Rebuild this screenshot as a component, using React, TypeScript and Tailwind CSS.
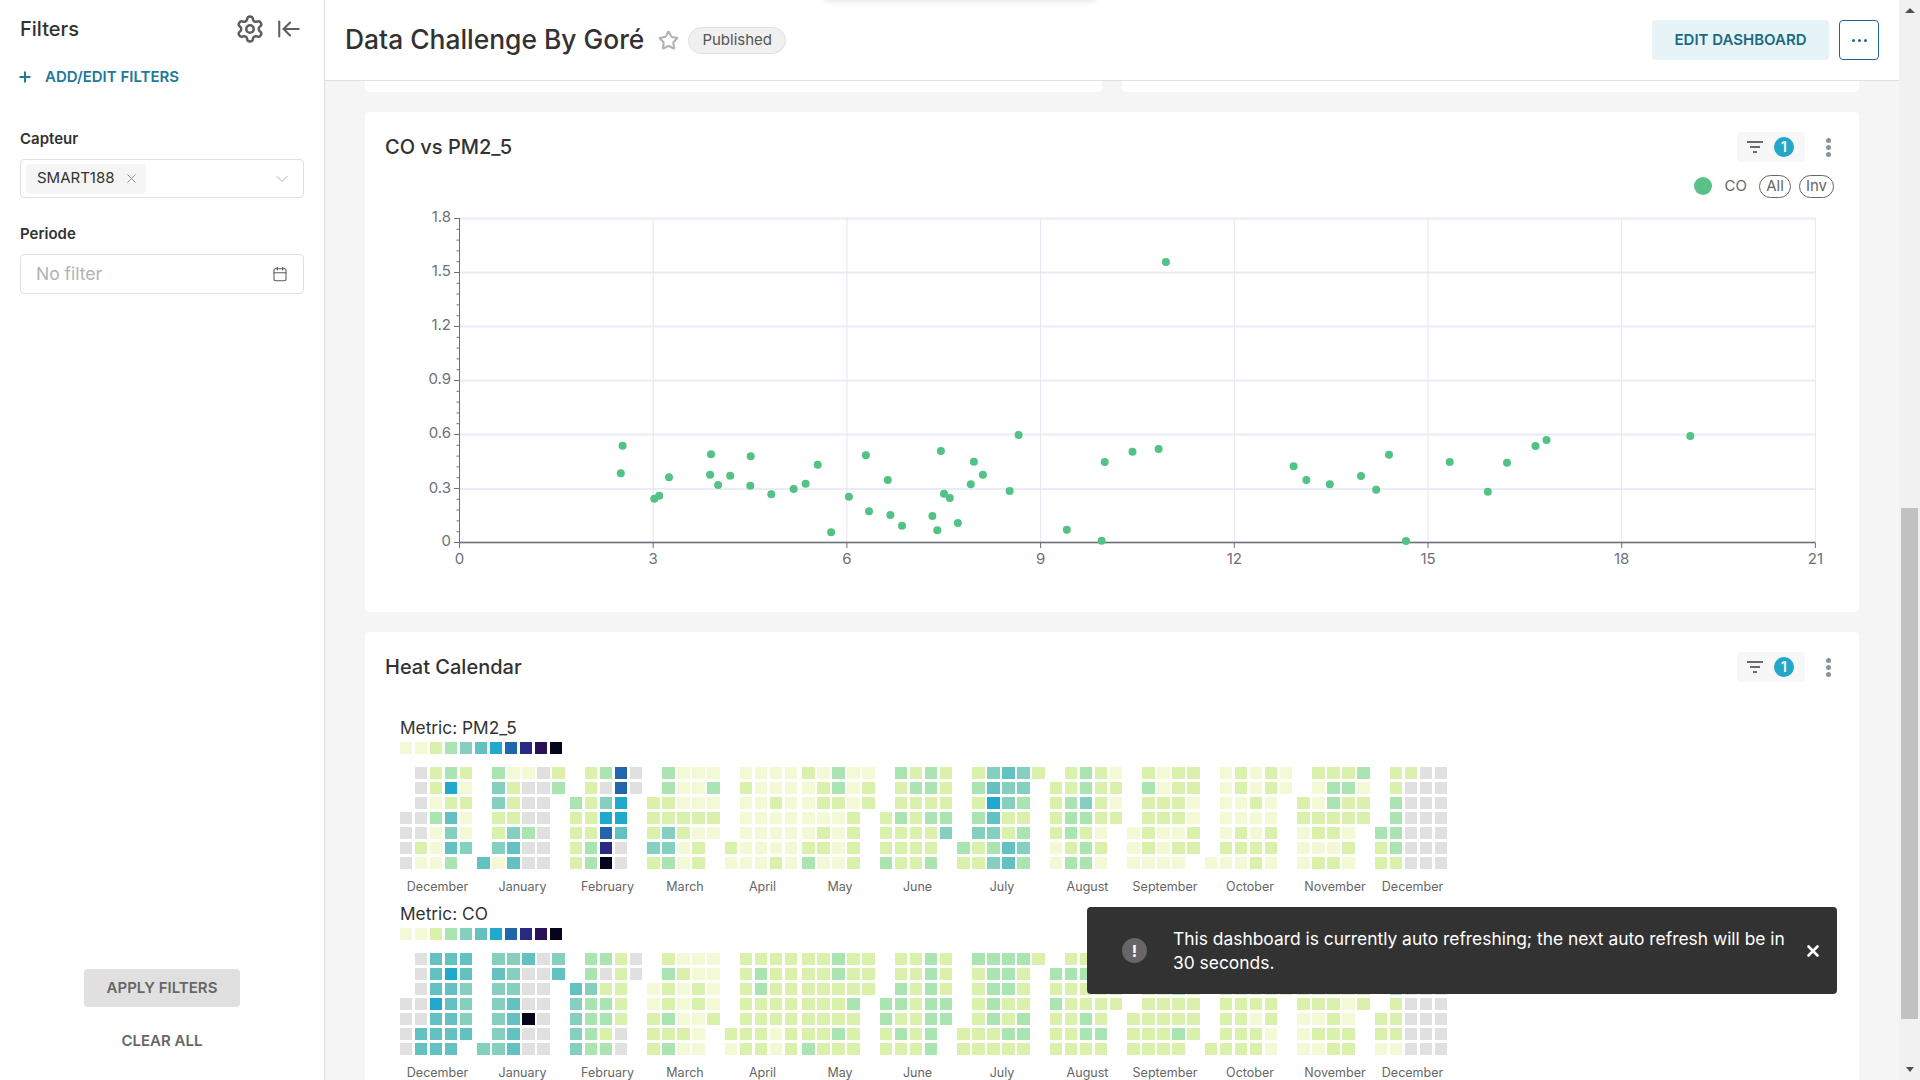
import {ArrowLeftToLine, Calendar, ChevronDown, Plus, Settings, Star, X} from "lucide-react";

const levelColors: Record<string, string> = {
  g: "#e0e0e0",
  "1": "#f3f9d4",
  "2": "#d9f1ab",
  "3": "#aae4b0",
  "4": "#84cfbd",
  "5": "#63c1c1",
  "6": "#20a9cd",
  "7": "#2166ac",
  "8": "#2a2a85",
  "9": "#2a1158",
  "0": "#04041c",
};

const legendLevels = ["1", "1", "2", "3", "4", "5", "6", "7", "8", "9", "0"];

// x of each week column and label centre per month
const months = [
  {name: "December", label: 437.5, w: 12, xs: [400, 415, 430, 445, 460]},
  {name: "January", label: 522.5, w: 13, xs: [477, 492, 507, 522, 537, 552]},
  {name: "February", label: 607.5, w: 12, xs: [570, 585, 600, 615, 630]},
  {name: "March", label: 685, w: 13, xs: [647, 662, 677, 692, 707]},
  {name: "April", label: 762.5, w: 12, xs: [725, 740, 755, 770, 785]},
  {name: "May", label: 840, w: 13, xs: [802, 817, 832, 847, 862]},
  {name: "June", label: 917.5, w: 12, xs: [880, 895, 910, 925, 940]},
  {name: "July", label: 1002, w: 13, xs: [957, 972, 987, 1002, 1017, 1032]},
  {name: "August", label: 1087.5, w: 12, xs: [1050, 1065, 1080, 1095, 1110]},
  {name: "September", label: 1165, w: 13, xs: [1127, 1142, 1157, 1172, 1187]},
  {name: "October", label: 1250, w: 12, xs: [1205, 1220, 1235, 1250, 1265, 1280]},
  {name: "November", label: 1335, w: 13, xs: [1297, 1312, 1327, 1342, 1357]},
  {name: "December", label: 1412.5, w: 12, xs: [1375, 1390, 1405, 1420, 1435]},
];

const pmCells = [
  [".g232", ".g261", ".g122", "gg351", "gg141", "g2154", "g113."],
  [".311g2", ".42gg3", ".42gg.", ".22gg.", ".243g.", ".45gg.", "515gg."],
  [".237g", ".2g7g", "3246.", "2266.", "2275.", "238g.", "230g."],
  [".3111", ".3113", "22111", "22222", "24211", "4412.", "2312."],
  [".1111", ".2111", ".1121", ".1111", ".1111", "21111", "11121"],
  ["21311", "12312", "12212", "1112.", "1212.", "2212.", "3112."],
  [".3232", ".2332", ".2222", "23233", "22224", "2222.", "3223."],
  [".24542", ".3544.", ".2643.", ".3522.", ".4423.", "32354.", "22453."],
  [".2321", "22322", "23421", "23322", "2321.", "1232.", "1331."],
  [".2122", ".3122", ".2221", ".2221", "12112", "12122", "1111."],
  [".12121", ".12121", ".1121.", ".1111.", ".1212.", ".2222.", "11121."],
  [".2223", ".1331", "21322", "22222", "1221.", "1112.", "1221."],
  [".22gg", ".2ggg", ".3ggg", ".3ggg", "33ggg", "23ggg", "22ggg"],
];

const coCells = [
  [".g555", ".g565", ".g554", "gg654", "gg554", "g5555", "g555."],
  [".445g4", ".54gg5", ".44gg.", ".45gg.", ".450g.", ".45gg.", "445gg."],
  [".332g", ".3g2g", "5422.", "4332.", "4332.", "432g.", "433g."],
  [".2111", ".3211", "12121", "12121", "23112", "2221.", "2311."],
  [".2222", ".2322", ".2322", ".2222", ".2222", "22212", "12212"],
  ["22322", "22322", "22222", "2223.", "2222.", "2232.", "3222."],
  [".2232", ".2232", ".3232", "33233", "32233", "2323.", "2223."],
  [".33332", ".2332.", ".2332.", ".2322.", ".2323.", "22233.", "22222."],
  [".2221", "33322", "22222", "32222", "2232.", "2233.", "2222."],
  [".2222", ".2222", ".2232", ".2222", "22222", "22232", "2222."],
  [".22222", ".22222", ".22222", ".2222.", ".2212.", ".2221.", "22221."],
  [".2222", ".2222", "22222", "22212", "1121.", "1222.", "1122."],
  [".22gg", ".2ggg", ".3ggg", ".2ggg", "22ggg", "22ggg", "11ggg"],
];

// scatter points, in page pixels
const points = [
  [622.6, 445.7], [620.8, 473.3], [654.3, 498.7], [659.2, 495.7], [669, 477.3], [711, 454.3], [710.1, 474.7],
  [718.1, 485], [730.2, 475.7], [750.7, 456.3], [750.3, 485.7], [771.3, 494.3], [793.6, 489], [805.6, 483.7],
  [817.7, 464.7], [831.1, 532.3], [848.9, 496.7], [865.9, 455.3], [869, 511.3], [887.8, 480], [890.4, 515],
  [902, 525.7], [932.4, 516], [937.3, 530.3], [940.9, 451], [944, 493.7], [949.8, 498], [957.9, 523],
  [970.8, 484.3], [973.9, 461.7], [982.9, 474.7], [1009.6, 491], [1018.6, 435], [1066.8, 529.7], [1101.6, 540.7],
  [1104.7, 462], [1132.5, 451.7], [1158.6, 449], [1165.9, 262], [1293.6, 466.3], [1306.4, 480], [1329.8, 484.3],
  [1361, 476], [1376.2, 489.7], [1389, 454.7], [1406, 541], [1449.7, 462], [1487.8, 491.7], [1507, 462.7], [1535.5, 446],
  [1546.5, 440], [1690.3, 436],
];

const yTicks = [
  {label: "1.8", y: 218.5},
  {label: "1.5", y: 272.5},
  {label: "1.2", y: 326.5},
  {label: "0.9", y: 380.5},
  {label: "0.6", y: 434.5},
  {label: "0.3", y: 489},
  {label: "0", y: 542.5},
];
const xTicks = [0, 3, 6, 9, 12, 15, 18, 21];
const xAt = (v: number) => 459.5 + (v / 3) * 193.7;

const FilterChip = () => (
  <div className="flex items-center gap-[11px] h-[30px] w-[68px] rounded bg-[#f7f7f7] pl-[10px]">
    <svg width="16" height="12" viewBox="0 0 16 12" fill="#6b6b6b">
      <rect x="0" y="0" width="16" height="2" />
      <rect x="3" y="5" width="10" height="2" />
      <rect x="6" y="10" width="4" height="2" />
    </svg>
    <span className="flex items-center justify-center w-5 h-5 rounded-full bg-[#20a7c9] text-white text-sm font-semibold">1</span>
  </div>
);

const Kebab = () => (
  <div className="flex flex-col gap-[2px] ml-[21px] mr-[28px]">
    <span className="w-[5px] h-[5px] rounded-full bg-[#87939b]" />
    <span className="w-[5px] h-[5px] rounded-full bg-[#87939b]" />
    <span className="w-[5px] h-[5px] rounded-full bg-[#87939b]" />
  </div>
);

const CardHeader = ({title}: {title: string}) => (
  <div className="flex items-center h-[30px] pl-5">
    <h3 className="flex-1 text-xl font-medium text-[#323232]">{title}</h3>
    <FilterChip />
    <Kebab />
  </div>
);

const ScatterChart = () => (
  <svg className="block w-[1494px] h-[415px]" viewBox="365 197 1494 415">
    {yTicks.map((t) => (
      <line key={t.label} x1={459.5} x2={1815.5} y1={t.y} y2={t.y} stroke="#e9ecf6" strokeWidth="2" />
    ))}
    {xTicks.slice(1).map((v) => (
      <line key={v} x1={xAt(v)} x2={xAt(v)} y1={218} y2={542} stroke="#e3e6f2" />
    ))}
    {Array.from({length: 31}).map((_, i) => (
      <line key={i} x1={i % 5 === 0 ? 454 : 456.5} x2={459.5} y1={218.5 + i * 10.8} y2={218.5 + i * 10.8} stroke="#6e7079" />
    ))}
    <line x1={459.5} x2={459.5} y1={218} y2={543} stroke="#6e7079" />
    <line x1={459.5} x2={1815.5} y1={542.5} y2={542.5} stroke="#6e7079" strokeWidth="1.5" />
    {xTicks.map((v) => (
      <line key={v} x1={xAt(v)} x2={xAt(v)} y1={543} y2={548} stroke="#6e7079" />
    ))}
    {yTicks.map((t) => (
      <text key={t.label} x={451} y={t.y + 3.5} textAnchor="end" fontSize="15" fill="#6e7079">{t.label}</text>
    ))}
    {xTicks.map((v) => (
      <text key={v} x={xAt(v)} y={563.5} textAnchor="middle" fontSize="15" fill="#6e7079">{v}</text>
    ))}
    {points.map(([x, y], i) => (
      <circle key={i} cx={x} cy={y} r="4" fill="#52c285" />
    ))}
  </svg>
);

const HeatMap = ({metric, cells}: {metric: string; cells: string[][]}) => (
  <svg className="block w-[1454px] h-[186px]" viewBox="385 0 1454 186">
    <text x={400} y={24.5} fontSize="17.3" fill="#323232">Metric: {metric}</text>
    {legendLevels.map((level, i) => (
      <rect key={i} x={400 + i * 15} y={33} width={12} height={12} fill={levelColors[level]} />
    ))}
    {months.map((m, mi) => (
      <g key={mi}>
        {cells[mi].map((row, r) =>
          row.split("").map((c, col) =>
            c === "." ? null : (
              <rect key={`${r}-${col}`} x={m.xs[col]} y={58 + r * 15} width={m.w} height={12} fill={levelColors[c]} />
            )
          )
        )}
        <text x={m.label} y={182} textAnchor="middle" fontSize="12.5" fill="#666666">{m.name}</text>
      </g>
    ))}
  </svg>
);

export default function App() {
  return (
    <div className="relative flex h-screen w-screen overflow-hidden bg-white [font-family:Inter,sans-serif]">
      {/* Filter bar */}
      <aside className="flex flex-col w-[325px] shrink-0 border-r border-[#e0e0e0] px-5 pt-4 pb-[30px]">
        <div className="flex items-center h-[26px]">
          <h2 className="flex-1 text-xl font-medium text-[#323232]">Filters</h2>
          <Settings size={30} strokeWidth={2} className="text-[#5e5e5e] mr-px" />
          <ArrowLeftToLine size={26} strokeWidth={1.9} className="text-[#5e5e5e] ml-[10px] mr-[2px]" />
        </div>
        <button className="flex items-center gap-3 mt-[25px] h-5 -ml-[3px] text-[15px] font-semibold text-[#20799a]">
          <Plus size={16} strokeWidth={3} />
          ADD/EDIT FILTERS
        </button>
        <label className="mt-[42px] text-[15px] font-semibold text-[#323232] leading-5">Capteur</label>
        <div className="flex items-center justify-between mt-[10px] h-[39px] rounded border border-[#e0e0e0] pl-[5px] pr-[11px]">
          <div className="flex items-center gap-[9px] h-[30px] rounded-sm bg-[#f5f5f5] pl-[11px] pr-[7px] text-[15px] text-[#323232]">
            SMART188
            <X size={15} strokeWidth={1.5} className="text-[#8a8a8a]" />
          </div>
          <ChevronDown size={20} strokeWidth={1.2} className="text-[#b2b2b2]" />
        </div>
        <label className="mt-[26px] text-[15px] font-semibold text-[#323232] leading-5">Periode</label>
        <div className="flex items-center justify-between mt-[10px] h-[40px] rounded border border-[#e0e0e0] pl-[15px] pr-[15px]">
          <span className="text-[17.5px] text-[#b2b2b2]">No filter</span>
          <Calendar size={16} strokeWidth={1.6} className="text-[#5e5e5e]" />
        </div>
        <div className="flex-1" />
        <button className="self-center w-[156px] h-[38px] rounded bg-[#e0e0e0] text-[15px] font-semibold text-[#666666]">APPLY FILTERS</button>
        <button className="self-center mt-[23px] h-5 text-[15px] font-semibold text-[#666666]">CLEAR ALL</button>
      </aside>

      {/* Dashboard */}
      <div className="flex flex-col flex-1 min-w-0">
        <header className="flex items-center h-[81px] shrink-0 border-b border-[#e0e0e0] pl-[20px] pr-[20px]">
          <h1 className="text-[26.4px] font-medium text-[#323232]">Data Challenge By Goré</h1>
          <Star size={21} strokeWidth={2.4} className="ml-[14px] text-[#b2b2b2]" />
          <span className="flex items-center ml-[9px] h-[27px] rounded-full border border-[#e0e0e0] bg-[#f0f0f0] px-[13px] text-[15px] text-[#555555]">Published</span>
          <div className="flex-1" />
          <button className="w-[177px] h-10 rounded bg-[#e6f4f8] text-[15px] font-semibold text-[#1a6a85]">EDIT DASHBOARD</button>
          <button className="flex items-center justify-center gap-[3px] w-10 h-10 ml-[10px] rounded border border-[#1a6a85]">
            <span className="w-[3px] h-[3px] rounded-full bg-[#1a6a85]" />
            <span className="w-[3px] h-[3px] rounded-full bg-[#1a6a85]" />
            <span className="w-[3px] h-[3px] rounded-full bg-[#1a6a85]" />
          </button>
        </header>
        <main className="flex-1 min-h-0 overflow-hidden bg-[#f5f5f5] px-10">
          <div className="grid grid-cols-2 gap-5 h-[11px]">
            <div className="rounded-b bg-white" />
            <div className="rounded-b bg-white" />
          </div>
          <section className="mt-5 h-[500px] rounded bg-white pt-5">
            <CardHeader title="CO vs PM2_5" />
            <div className="flex items-center justify-end h-[22px] mt-[13px] pr-[25px] text-[15px] text-[#666666]">
              <span className="w-[18px] h-[18px] rounded-full bg-[#5ac189]" />
              <span className="ml-[13px] mr-[12px]">CO</span>
              <span className="flex items-center justify-center w-[32px] h-[23px] rounded-full border border-[#666666]">All</span>
              <span className="flex items-center justify-center w-[35px] h-[23px] ml-[8px] rounded-full border border-[#666666]">Inv</span>
            </div>
            <ScatterChart />
          </section>
          <section className="mt-5 h-[500px] rounded bg-white pt-5">
            <CardHeader title="Heat Calendar" />
            <div className="flex flex-col pl-5 mt-[27px]">
              <HeatMap metric="PM2_5" cells={pmCells} />
              <HeatMap metric="CO" cells={coCells} />
            </div>
          </section>
        </main>
      </div>

      {/* Scrollbar */}
      <div className="flex flex-col items-center justify-between w-[21px] shrink-0 bg-[#f1f1f1] py-[8px]">
        <span className="w-0 h-0 border-x-[5px] border-x-transparent border-b-[5px] border-b-[#505050]" />
        <span className="w-0 h-0 border-x-[4px] border-x-transparent border-t-[5px] border-t-[#505050]" />
      </div>
      <div className="absolute right-[2px] top-[508px] w-[17px] h-[511px] bg-[#c1c1c1]" />

      {/* Off-screen toast, only its shadow shows */}
      <div className="absolute left-[825px] -top-[40px] w-[270px] h-[40px] shadow-[0_1px_6px_rgba(0,0,0,0.12)]" />

      {/* Toast */}
      <div className="absolute left-[1087px] top-[907px] flex items-center w-[750px] h-[87px] rounded bg-[#323232] pl-[35px] pr-[15px] text-white">
        <span className="flex items-center justify-center w-[25px] h-[25px] shrink-0 rounded-full bg-[#666666] text-base font-bold">!</span>
        <p className="flex-1 ml-[26px] text-[17.4px] leading-6">This dashboard is currently auto refreshing; the next auto refresh will be in 30 seconds.</p>
        <X size={18} strokeWidth={3.5} className="shrink-0" />
      </div>
    </div>
  );
}
